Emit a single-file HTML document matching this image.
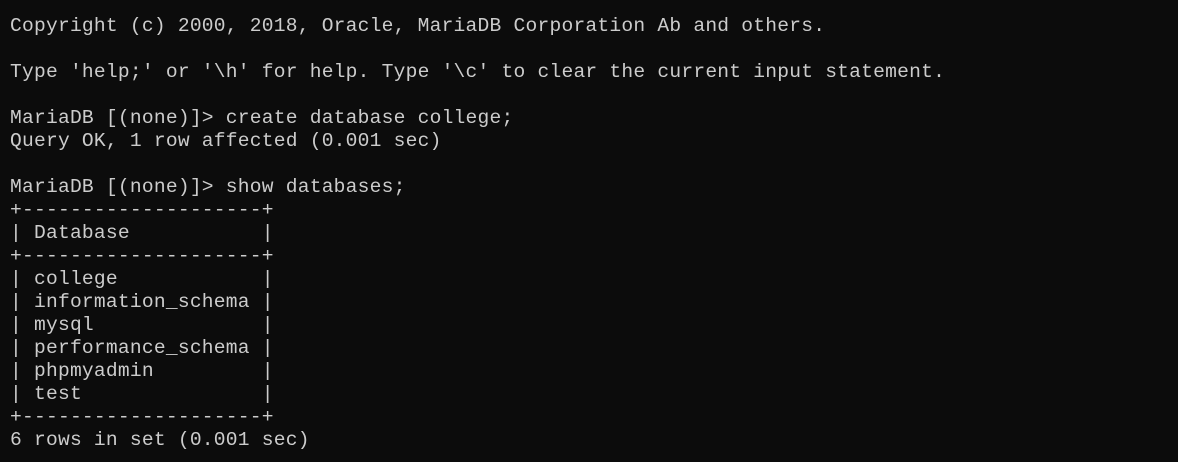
<!DOCTYPE html>
<html><head><meta charset="utf-8"><style>
html,body{margin:0;padding:0;background:#0c0c0c;width:1178px;height:462px;overflow:hidden}
pre{margin:0;position:absolute;left:10px;top:15px;font-family:"Liberation Mono",monospace;font-size:19.6px;line-height:23px;color:#cccccc;letter-spacing:0.23px}
</style></head><body><pre>Copyright (c) 2000, 2018, Oracle, MariaDB Corporation Ab and others.

Type 'help;' or '\h' for help. Type '\c' to clear the current input statement.

MariaDB [(none)]&gt; create database college;
Query OK, 1 row affected (0.001 sec)

MariaDB [(none)]&gt; show databases;
+--------------------+
| Database           |
+--------------------+
| college            |
| information_schema |
| mysql              |
| performance_schema |
| phpmyadmin         |
| test               |
+--------------------+
6 rows in set (0.001 sec)</pre></body></html>
